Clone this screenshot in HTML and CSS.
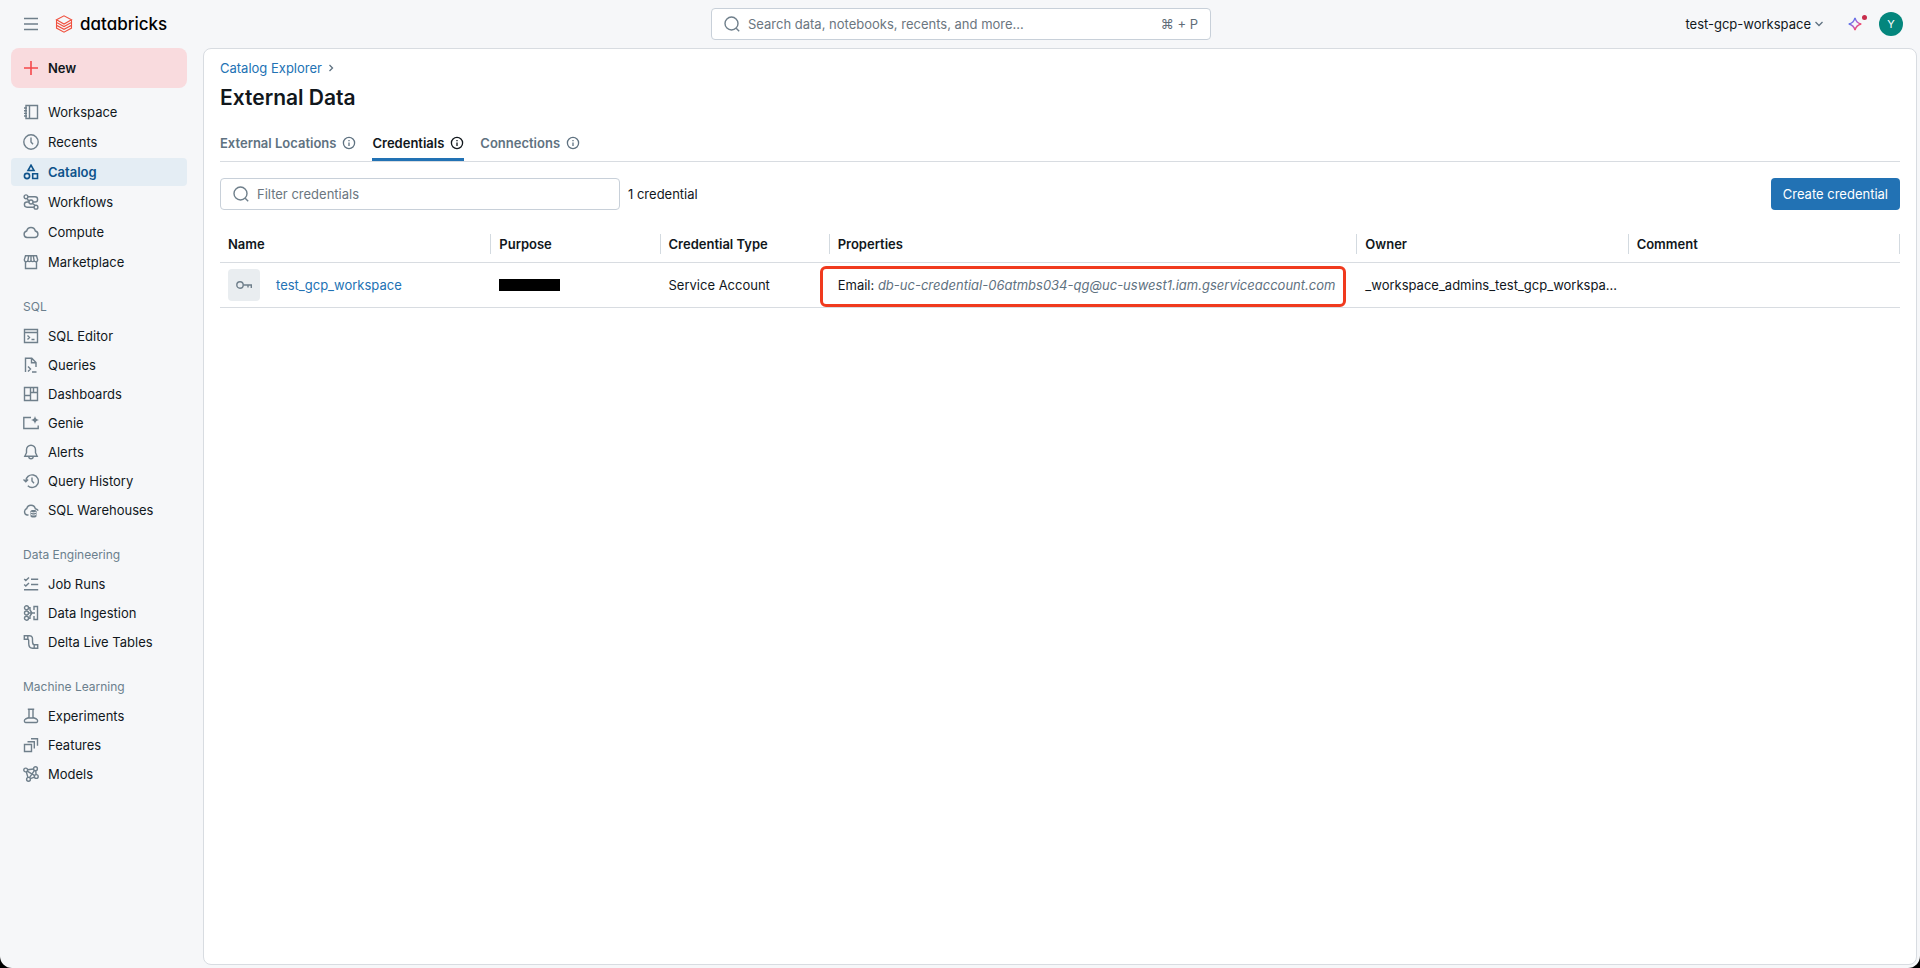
FILE: index.html
```html
<!DOCTYPE html>
<html lang="en">
<head>
<meta charset="utf-8">
<meta name="viewport" content="width=device-width, initial-scale=1">
<title>External Data - Databricks</title>
<link rel="stylesheet" href="styles.css">
</head>
<body>
<div class="app">
  <header class="topbar">
    <div class="topbar-left">
      <button class="icon-button" type="button" aria-label="Toggle menu">
        <svg class="icon" viewBox="0 0 16 16"><path d="M1 2.500h14M1 8h14M1 13.500h14"/></svg>
      </button>
      <a class="brand" href="#">
        <svg class="brand-mark" viewBox="0 0 18 18"><path d="M1.500 4.800 9 .8l7.500 4L9 9zM1.500 4.800v2.600L9 11.500l7.500-4.100V4.800M1.500 7.700v2.600L9 14.300l7.500-4V7.700M1.500 10.500v2.600L9 17.200l7.500-4.100v-2.600"/></svg>
        <span class="brand-name">databricks</span>
      </a>
    </div>
    <label class="search-box">
      <svg class="icon" viewBox="0 0 16 16"><circle cx="7.500" cy="7.500" r="6.500"/><path d="m12.200 12.200 3 3"/></svg>
      <input class="search-input" type="text" aria-label="Search" placeholder="Search data, notebooks, recents, and more...">
      <span class="shortcut">⌘ + P</span>
    </label>
    <div class="topbar-right">
      <button class="workspace-switch" type="button">test-gcp-workspace
        <svg class="chevron" viewBox="0 0 10 10"><path d="m1.500 3 3.500 3.500L8.500 3"/></svg>
      </button>
      <button class="assistant" type="button" aria-label="Assistant">
        <svg class="assistant-icon" viewBox="0 0 16 16">
          <defs><linearGradient id="spark" x1="0" y1="0" x2="1" y2="1"><stop offset=".2" stop-color="#4f7df0"/><stop offset=".5" stop-color="#b35bd0"/><stop offset=".8" stop-color="#ff4a5c"/></linearGradient></defs>
          <path stroke="url(#spark)" d="M8 1.800c.9 3.800 2.400 5.300 6.200 6.200-3.800.9-5.300 2.400-6.200 6.200C7.100 10.400 5.600 8.900 1.800 8 5.600 7.100 7.100 5.600 8 1.800z"/>
        </svg>
        <span class="assistant-dot"></span>
      </button>
      <button class="avatar" type="button">Y</button>
    </div>
  </header>

  <div class="body-row">
    <nav class="sidebar">
      <button class="new-button" type="button">
        <svg class="icon" viewBox="0 0 16 16"><path d="M8 1v14M1 8h14"/></svg>New
      </button>
      <ul class="nav-list nav-main">
        <li><a class="nav-item" href="#"><svg class="icon" viewBox="0 0 16 16"><path d="M3 1.500h11.500v13H3zM6.500 1.500v13M1 4h3M1 6.700h3M1 9.400h3M1 12h3"/></svg>Workspace</a></li>
        <li><a class="nav-item" href="#"><svg class="icon" viewBox="0 0 16 16"><circle cx="8" cy="8" r="7.200"/><path d="M8 3.500V8l2 2.200"/></svg>Recents</a></li>
        <li><a class="nav-item selected" href="#" aria-current="page"><svg class="icon" viewBox="0 0 16 16"><path d="M8 1.200 11 6.500H5zM9.700 9.700h4.800v4.800H9.700z"/><circle cx="4" cy="12" r="2.600"/></svg>Catalog</a></li>
        <li><a class="nav-item" href="#"><svg class="icon" viewBox="0 0 16 16"><circle cx="3" cy="2.800" r="1.900"/><circle cx="13" cy="13.200" r="1.900"/><circle cx="8" cy="8" r="2"/><path d="M5 2.800h7a2.600 2.600 0 0 1 0 5.200h-2M6 8H4a2.600 2.600 0 0 0 0 5.200h7M4 5.500 6.500 6.700M9.500 9.500l2.500 1.800"/></svg>Workflows</a></li>
        <li><a class="nav-item" href="#"><svg class="icon" viewBox="0 0 16 16"><path d="M4 13.500a3.300 3.300 0 0 1-.3-6.500 4.400 4.400 0 0 1 8.600 0 3.300 3.300 0 0 1-.2 6.500z"/></svg>Compute</a></li>
        <li><a class="nav-item" href="#"><svg class="icon" viewBox="0 0 16 16"><path d="M2.500 1.800h11l1.200 4a1.800 1.800 0 0 1-3.400.9 1.900 1.900 0 0 1-3.300 0 1.900 1.900 0 0 1-3.300 0 1.800 1.800 0 0 1-3.400-.9zM5.700 2l-.8 4.500M10.300 2l.8 4.500M8 2v4.500M2.500 8v6.500h11V8"/></svg>Marketplace</a></li>
      </ul>
      <h2 class="nav-heading">SQL</h2>
      <ul class="nav-list">
        <li><a class="nav-item" href="#"><svg class="icon" viewBox="0 0 16 16"><path d="M1.500 1.500h13v13h-13zM1.500 4.500h13M4.500 7.500l2 2-2 2M8.500 11.500h3"/></svg>SQL Editor</a></li>
        <li><a class="nav-item" href="#"><svg class="icon" viewBox="0 0 16 16"><path d="M2.500 15V1.200h6.300L13 5.500V10M8.500 1.500v4.300H13M5 9.500l2.500 2.500L5 14.500M9 15h4.500"/></svg>Queries</a></li>
        <li><a class="nav-item" href="#"><svg class="icon" viewBox="0 0 16 16"><path d="M1.500 1.500h13v13h-13zM7.500 1.500v13M1.500 9.500h6M7.500 6.500h7M10.500 1.500v5"/></svg>Dashboards</a></li>
        <li><a class="nav-item" href="#"><svg class="icon" viewBox="0 0 16 16"><path d="M8 2.500H.8v11h14.400V10.500"/><path class="filled" d="M12 1c.4 2.300 1.700 3.600 4 4-2.300.4-3.600 1.700-4 4-.4-2.300-1.700-3.600-4-4 2.300-.4 3.600-1.700 4-4z"/></svg>Genie</a></li>
        <li><a class="nav-item" href="#"><svg class="icon" viewBox="0 0 16 16"><path d="M8 1.200a4.500 4.500 0 0 0-4.500 4.500v3L1.800 12.200h12.400l-1.700-3.500v-3A4.500 4.500 0 0 0 8 1.200zM5.800 12.500a2.200 2.200 0 0 0 4.400 0"/></svg>Alerts</a></li>
        <li><a class="nav-item" href="#"><svg class="icon" viewBox="0 0 16 16"><path d="M2.800 8.500a6.300 6.300 0 1 1 2 4.300M.5 6.500l2.300 2.300 2.300-2.300M9 4.500V8l2 2.200"/></svg>Query History</a></li>
        <li><a class="nav-item" href="#"><svg class="icon" viewBox="0 0 16 16"><path d="M5.500 13H4a3.300 3.300 0 0 1-.3-6.300 4.400 4.400 0 0 1 8.600 0c1.300.2 2.400 1 2.900 1.900"/><path class="filled" d="M7.500 9.300c0-.8 1.300-1.300 3-1.300s3 .5 3 1.300v4.900c0 .8-1.300 1.300-3 1.300s-3-.5-3-1.300z"/><path class="knockout" d="M8 10.200c1.200.7 3.800.7 5 0M8 12.500c1.200.7 3.800.7 5 0"/></svg>SQL Warehouses</a></li>
      </ul>
      <h2 class="nav-heading">Data Engineering</h2>
      <ul class="nav-list">
        <li><a class="nav-item" href="#"><svg class="icon" viewBox="0 0 16 16"><path d="m1.200 3 1.600 1.600L6 1.400M1.200 8.500l1.600 1.600L6 6.900M8 3.200h7.200M8 8.500h7.200M1 13.800h14.200"/></svg>Job Runs</a></li>
        <li><a class="nav-item" href="#"><svg class="icon" viewBox="0 0 16 16"><circle cx="3.500" cy="2.800" r="2"/><circle cx="3.500" cy="8" r="2"/><circle cx="3.500" cy="13.200" r="2"/><path d="M5.500 2.800H7V5l2 3-2 3v2.200H5.500M5.500 8H12M11 5V1.500h3.500v13H11V11"/></svg>Data Ingestion</a></li>
        <li><a class="nav-item" href="#"><svg class="icon" viewBox="0 0 16 16"><path d="M1.300 1.800h3.500v3.500H1.300zM11.200 10.700h3.500v3.500h-3.500zM4.800 1.800H6.500C10 1.800 9.500 5 9.500 7.200s0 3.500 1.700 3.500M4.800 5.300c1.200 0 .9 2 .9 4 0 3 .8 4.900 3.800 4.900h1.700"/></svg>Delta Live Tables</a></li>
      </ul>
      <h2 class="nav-heading">Machine Learning</h2>
      <ul class="nav-list">
        <li><a class="nav-item" href="#"><svg class="icon" viewBox="0 0 16 16"><path d="M4.800 1.200h6.400M6 1.200v8.300l-3.500 1.500c-1.500.8-1.500 3.500 0 3.500h11c1.500 0 1.500-2.700 0-3.500L10 9.500V1.200M5.500 10h5"/></svg>Experiments</a></li>
        <li><a class="nav-item" href="#"><svg class="icon" viewBox="0 0 16 16"><path d="M1.500 7.500h7v7h-7zM4.500 4.700h6.800v6.800M8 1.700h6.500v7"/></svg>Features</a></li>
        <li><a class="nav-item" href="#"><svg class="icon" viewBox="0 0 16 16"><circle cx="2.700" cy="4" r="1.900"/><circle cx="12.500" cy="2.700" r="1.900"/><circle cx="13.300" cy="10.500" r="1.900"/><circle cx="5.500" cy="13.300" r="1.900"/><path d="m4.600 3.800 6-.8M12.700 4.600l.4 4M11.500 11.200l-4.200 1.500M3.300 5.800l1.600 5.600M4.200 5.200l7.500 4.400M11.500 4.400l-5 7.200"/></svg>Models</a></li>
      </ul>
    </nav>

    <main class="panel">
      <div class="breadcrumb"><a class="link" href="#">Catalog Explorer</a><svg class="crumb-arrow" viewBox="0 0 10 10"><path d="m3.500 2 3 3-3 3"/></svg></div>
      <h1 class="page-title">External Data</h1>
      <div class="tabs" role="tablist">
        <button class="tab" type="button" role="tab">External Locations <svg class="tab-icon" viewBox="0 0 14 14"><circle cx="7" cy="7" r="5.600"/><path d="M7 6.500v3.600M7 3.900v1.300"/></svg></button>
        <button class="tab active" type="button" role="tab" aria-selected="true">Credentials <svg class="tab-icon" viewBox="0 0 14 14"><circle cx="7" cy="7" r="5.600"/><path d="M7 6.500v3.600M7 3.900v1.300"/></svg></button>
        <button class="tab" type="button" role="tab">Connections <svg class="tab-icon" viewBox="0 0 14 14"><circle cx="7" cy="7" r="5.600"/><path d="M7 6.500v3.600M7 3.900v1.300"/></svg></button>
      </div>
      <div class="toolbar">
        <label class="search-box filter-box">
          <svg class="icon" viewBox="0 0 16 16"><circle cx="7.500" cy="7.500" r="6.500"/><path d="m12.200 12.200 3 3"/></svg>
          <input class="search-input" type="text" aria-label="Filter credentials" placeholder="Filter credentials">
        </label>
        <span>1 credential</span>
        <button class="primary-button" type="button">Create credential</button>
      </div>
      <table class="grid">
        <colgroup><col class="col-wide"><col class="col-narrow"><col class="col-narrow"><col class="col-props"><col class="col-wide"><col class="col-wide"></colgroup>
        <thead>
          <tr>
            <th scope="col"><div class="head-cell">Name</div></th>
            <th scope="col"><div class="head-cell">Purpose</div></th>
            <th scope="col"><div class="head-cell">Credential Type</div></th>
            <th scope="col"><div class="head-cell">Properties</div></th>
            <th scope="col"><div class="head-cell">Owner</div></th>
            <th scope="col"><div class="head-cell">Comment</div></th>
          </tr>
        </thead>
        <tbody>
          <tr>
            <td>
              <div class="name-cell">
                <span class="key-tile"><svg class="icon" viewBox="0 0 16 16"><circle cx="4" cy="8" r="3.200"/><path d="M7.200 8h8.100v3M12 8v2.500"/></svg></span>
                <a class="link" href="#">test_gcp_workspace</a>
              </div>
            </td>
            <td><span class="redacted"></span></td>
            <td>Service Account</td>
            <td class="props-cell">Email: <em class="email">db-uc-credential-06atmbs034-qg@uc-uswest1.iam.gserviceaccount.com</em><span class="highlight"></span></td>
            <td>_workspace_admins_test_gcp_workspa...</td>
            <td></td>
          </tr>
        </tbody>
      </table>
    </main>
  </div>
</div>
</body>
</html>
```
FILE: styles.css
```css
* { box-sizing: border-box; }

html { background: #000; }

body {
  margin: 0;
  font-family: Inter, "Noto Sans", sans-serif;
  font-size: 13px;
  line-height: 20px;
  color: #11171c;
}

button, input { font: inherit; color: inherit; }
button { border: 0; padding: 0; background: none; cursor: pointer; }
a { color: inherit; text-decoration: none; }

svg {
  display: block;
  flex: none;
  fill: none;
  stroke: currentColor;
}

.icon { width: 16px; height: 16px; stroke-width: 1.4; color: #6f7f8b; }
.filled { fill: currentColor; stroke: none; }
.knockout { stroke: #f6f7f9; stroke-width: 1; }

.app {
  display: flex;
  flex-direction: column;
  min-height: 100vh;
  background: #f6f7f9;
  border-radius: 0 0 12px 12px;
}

/* Top bar */
.topbar {
  display: grid;
  grid-template-columns: 1fr 500px 1fr;
  align-items: center;
  height: 48px;
  padding: 0 17px 0 19px;
}
.topbar-left { display: flex; align-items: center; gap: 16px; padding-left: 4px; }
.icon-button .icon { stroke-width: 1.6; }
.brand { display: flex; align-items: center; gap: 7px; }
.brand-mark { width: 18px; height: 18px; color: #f0503f; stroke-width: 1.1; }
.brand-name {
  font-size: 17px;
  font-weight: 500;
  font-feature-settings: "cv11", "ss03";
  color: #000;
}

.search-box {
  display: flex;
  align-items: center;
  gap: 8px;
  height: 32px;
  padding: 0 12px;
  background: #fff;
  border: 1px solid #c8d0d9;
  border-radius: 4px;
}
.search-input {
  flex: 1;
  min-width: 0;
  padding: 0;
  border: 0;
  outline: 0;
  background: none;
}
.search-input::placeholder { color: #6b7680; opacity: 1; }
.shortcut { color: #5f6d78; }

.topbar-right { display: flex; align-items: center; justify-content: flex-end; }
.workspace-switch { display: flex; align-items: center; gap: 3px; margin-right: 23px; }
.chevron { width: 10px; height: 10px; stroke-width: 1.3; color: #5f7281; }
.assistant { position: relative; margin-right: 16px; }
.assistant-icon { width: 16px; height: 16px; stroke-width: 1.5; }
.assistant-dot {
  position: absolute;
  top: -1px;
  right: -4px;
  width: 5px;
  height: 5px;
  border-radius: 50%;
  background: #c82d4c;
}
.avatar {
  width: 24px;
  height: 24px;
  border-radius: 50%;
  background: #04867d;
  color: #fff;
  font-size: 11px;
}

/* Sidebar */
.body-row { display: flex; flex: 1; }
.sidebar { flex: none; width: 203px; padding: 0 16px 0 11px; }
.new-button {
  display: flex;
  align-items: center;
  gap: 9px;
  width: 100%;
  height: 40px;
  padding: 0 12px;
  border-radius: 8px;
  background: #f9dbde;
  font-weight: 600;
}
.new-button .icon { color: #f5484a; stroke-width: 1.6; }
.nav-list { margin: 0; padding: 0; list-style: none; display: grid; gap: 1px; }
.nav-main { margin-top: 10px; gap: 2px; }
.nav-item {
  display: flex;
  align-items: center;
  gap: 9px;
  height: 28px;
  padding: 0 12px;
  border-radius: 4px;
}
.nav-item.selected { background: #e4edf4; color: #0e538b; font-weight: 600; }
.nav-item.selected .icon { color: #0e538b; stroke-width: 1.6; }
.nav-heading {
  margin: 21px 0 5px;
  padding: 0 12px;
  font-size: 12px;
  font-weight: 400;
  line-height: 20px;
  color: #6b7f8d;
}

/* Content panel */
.panel {
  flex: 1;
  min-width: 0;
  margin: 0 3px 3px 0;
  padding: 9px 16px 16px;
  background: #fff;
  border: 1px solid #d8dce1;
  border-radius: 8px;
}
.link { color: #2272b4; }
.breadcrumb { display: flex; align-items: center; gap: 4px; }
.crumb-arrow { width: 10px; height: 10px; stroke-width: 1.3; color: #5f7281; }
.page-title { margin: 6px 0 0; font-size: 21px; line-height: 28px; font-weight: 600; }

.tabs {
  display: flex;
  gap: 16px;
  margin-top: 16px;
  border-bottom: 1px solid #d8dce1;
}
.tab {
  display: flex;
  align-items: center;
  gap: 6px;
  height: 33px;
  border-bottom: 3px solid transparent;
  color: #5f7281;
  font-weight: 600;
}
.tab.active { color: #11171c; border-color: #2272b4; }
.tab-icon { width: 14px; height: 14px; stroke-width: 1.3; }

.toolbar { display: flex; align-items: center; gap: 8px; margin-top: 16px; }
.filter-box { width: 400px; }
.primary-button {
  height: 32px;
  margin-left: auto;
  padding: 0 12px;
  border-radius: 4px;
  background: #2272b4;
  color: #fff;
}

/* Credentials table */
.grid { width: 100%; margin-top: 16px; border-collapse: collapse; table-layout: fixed; }
.col-wide { width: 271px; }
.col-narrow { width: 169px; }
.col-props { width: 527px; }
.grid th { height: 36px; padding: 0; border-bottom: 1px solid #d8dce1; text-align: left; font-weight: 600; }
.head-cell { padding-left: 8px; border-right: 1px solid #d3dae0; }
.grid td { height: 45px; padding: 0 8px; border-bottom: 1px solid #d8dce1; white-space: nowrap; }
.name-cell { display: flex; align-items: center; gap: 16px; }
.key-tile {
  display: grid;
  place-items: center;
  width: 32px;
  height: 32px;
  border-radius: 4px;
  background: #e9edf0;
}
.redacted { display: block; width: 61px; height: 12px; background: #000; }
.props-cell { position: relative; }
.email { color: #5f7281; }
.highlight {
  position: absolute;
  inset: 3px 11px 0 -10px;
  border: 3px solid #f03a1e;
  border-radius: 6px;
}
```
